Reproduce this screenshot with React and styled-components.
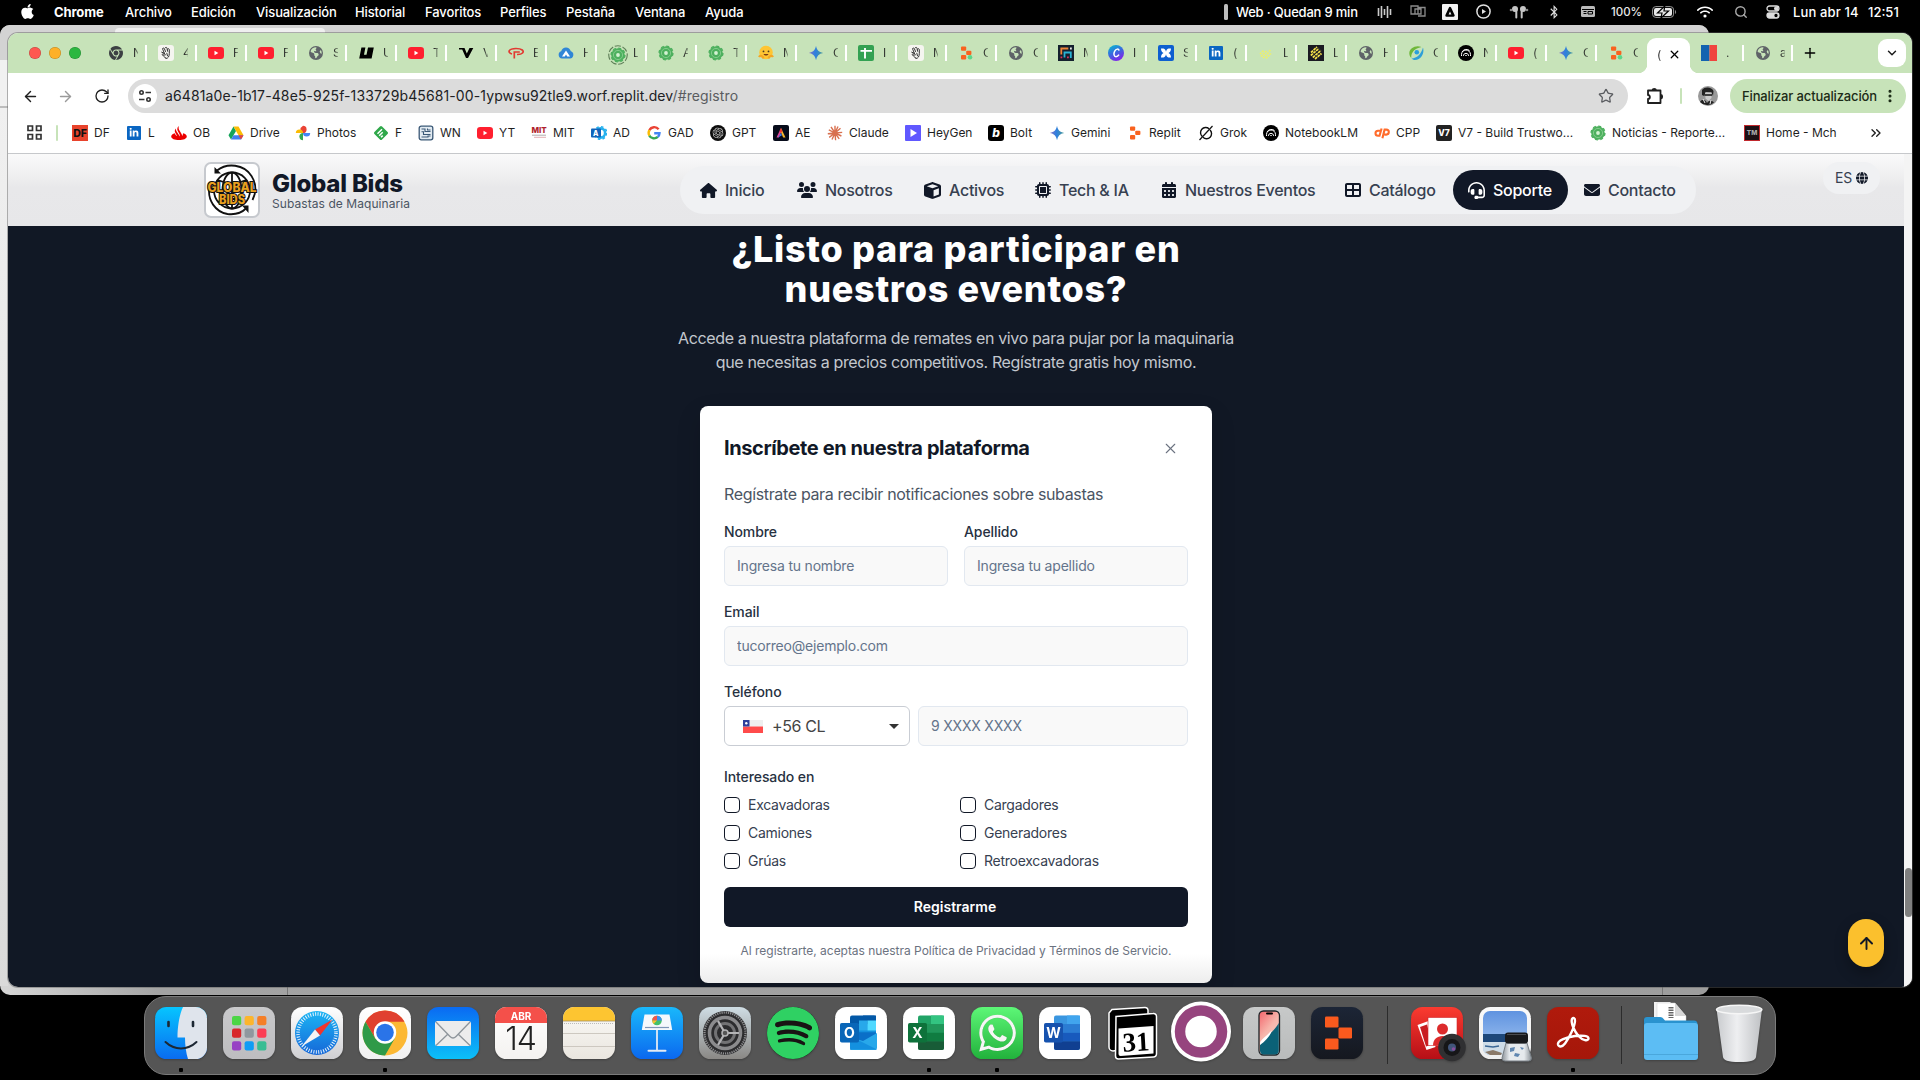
import React from "react";
import styled, { createGlobalStyle, css } from "styled-components";
import {
  FaApple, FaLinkedinIn, FaBluetoothB, FaWifi, FaGlobe, FaEarthAmericas,
  FaHouse, FaUsers, FaCube, FaMicrochip, FaCalendarDays, FaTableCellsLarge, FaHeadset,
  FaEnvelope, FaChrome, FaSpotify, FaWhatsapp,
} from "react-icons/fa6";
import { SiOpenai } from "react-icons/si";
import {
  ArrowLeft, ArrowRight, ArrowUp, RotateCw, Star, ChevronDown, X, Plus, EllipsisVertical,
  Search, ChevronsRight,
} from "lucide-react";

const sans = `Inter, "Liberation Sans", sans-serif`;

const Global = createGlobalStyle`
  *, *::before, *::after { box-sizing: border-box; }
  body { margin: 0; background: #000; font-family: ${sans}; overflow: hidden; }
  h1, h2, p { margin: 0; }
  svg { display: block; flex: none; }
  input, button { font-family: inherit; margin: 0; }
`;

/* ---------- desktop ---------- */
const Desktop = styled.div`
  position: relative; width: 1920px; height: 1080px; background: #000; overflow: hidden;
`;
const MenuBar = styled.header`
  height: 25px; display: flex; align-items: center; justify-content: space-between;
  padding: 0 19px 2px 19px; color: #fff; font-size: 13px; font-weight: 500;
`;
const MenuGroup = styled.nav`display: flex; align-items: center; height: 23px;`;
const MenuItem = styled.span`
  width: ${(p) => p.$w}px; letter-spacing: -0.12px; white-space: pre; flex: none;
  font-weight: ${(p) => (p.$bold ? 700 : 500)};
`;
const Status = styled.span`
  width: ${(p) => p.$w}px; display: flex; justify-content: ${(p) => (p.$left ? "flex-start" : "center")};
  align-items: center; flex: none; white-space: pre; color: ${(p) => p.$c || "#e8e8e8"};
  font-size: ${(p) => p.$size || 13}px; letter-spacing: ${(p) => p.$ls || 0}px;
`;
const BackWindow = styled.div`
  position: absolute; left: 0; top: 25px; width: 1709px; height: 970px; border-radius: 10px;
  background: linear-gradient(90deg, #d4d4d4 0, #d4d4d4 8px, #a3a3a3 160px, #9d9d9d 100%);
  overflow: hidden; display: flex; flex-direction: column; justify-content: space-between;
`;
const BackTop = styled.div`
  height: 35px; background: #d3d3d3; display: flex; align-items: flex-start; padding: 3px 0 0 115px;
`;
const BackTab = styled.i`width: 210px; height: 20px; border-radius: 4px; background: #efefef;`;
const BackSide = styled.div`flex: 1; width: 8px; background: linear-gradient(#f1f1f1 0 46px, #bdbdbd 46px 48px, #f0f0f0 48px, #dadada);`;
const BackFoot = styled.div`
  height: 9px; display: flex; justify-content: space-between; padding: 0 46px 0 287px;
  i { width: 1px; background: #777; }
`;

/* ---------- browser window ---------- */
const Browser = styled.main`
  position: absolute; left: 8px; top: 33px; width: 1904px; height: 954px; border-radius: 10px;
  overflow: hidden; background: #fff; display: flex; flex-direction: column;
  box-shadow: 0 0 0 1px rgba(90, 90, 90, 0.45);
`;
const TabStrip = styled.div`
  height: 40px; background: #c7e3b9; display: flex; align-items: center; padding: 0 6px 1px 21px; flex: none;
`;
const Lights = styled.div`display: flex; gap: 8px; width: 68px; flex: none;`;
const Light = styled.i`
  width: 12px; height: 12px; border-radius: 50%; background: ${(p) => p.$c};
  box-shadow: inset 0 0 0 0.5px rgba(0, 0, 0, 0.25);
`;
const Tab = styled.div`
  width: ${(p) => p.$w || 50}px; height: 16px; display: flex; align-items: center; flex: none;
  padding-left: 11px; border-right: 2px solid ${(p) => (p.$last ? "transparent" : "#fff")};
  font-size: 12px; line-height: 16px; color: #1f1f1f;
`;
const Favicon = styled.span`width: 16px; height: 16px; display: grid; place-items: center; flex: none;`;
const TabText = styled.span`
  width: 5px; overflow: hidden; margin-left: ${(p) => p.$ml ?? 9}px; white-space: nowrap; flex: none;
  mask-image: linear-gradient(90deg, #000 20%, rgba(0, 0, 0, 0.35));
`;
const ActiveTab = styled.div`
  width: 43px; height: 35px; align-self: flex-end; background: #fff; border-radius: 9px 9px 0 0;
  display: flex; align-items: center; gap: 6px; padding: 0 0 2px 10px; position: relative; font-size: 12px;
  margin: 0 0 -1px 2px; flex: none;
  &::before, &::after { content: ""; position: absolute; bottom: 0; width: 9px; height: 9px; }
  &::before { left: -9px; background: radial-gradient(circle at 0 0, transparent 9px, #fff 9.5px); }
  &::after { right: -9px; background: radial-gradient(circle at 100% 0, transparent 9px, #fff 9.5px); }
`;
const TabMenu = styled.button`
  width: 28px; height: 28px; border: 0; border-radius: 9px; background: #fff; margin-left: auto;
  display: grid; place-items: center; padding: 0; color: #1f1f1f;
`;
const NewTab = styled.span`width: 33px; display: grid; place-items: center;`;

const Toolbar = styled.div`height: 46px; display: flex; align-items: center; padding: 0 6px 0 10px; flex: none;`;
const NavIcon = styled.span`
  width: ${(p) => p.$w}px; display: grid; place-items: center; color: ${(p) => p.$c || "#1f1f1f"}; flex: none;
  padding-left: ${(p) => p.$pl || 0}px; margin-right: ${(p) => p.$mr || 0}px;
`;
const Omnibox = styled.div`
  width: 1500px; height: 34px; border-radius: 17px; background: #dcdcdc; display: flex; align-items: center;
  padding: 0 14px 0 5px; font-size: 14px; color: #202124; flex: none;
`;
const Chip = styled.span`width: 24px; height: 24px; border-radius: 50%; background: #fff; display: grid; place-items: center; margin-right: 8px;`;
const Url = styled.span`letter-spacing: 0.115px; flex: 1; padding-bottom: 1px; span { color: #5a5c60; }`;
const Divider = styled.i`width: 2px; height: 16px; border-radius: 1px; background: #c7e3b9; flex: none;`;
const Update = styled.button`
  width: 176px; height: 34px; border: 0; border-radius: 17px; background: #c7e3b9; color: #1c2b16;
  font-size: 13px; font-weight: 500; letter-spacing: -0.13px; display: flex; align-items: center;
  justify-content: space-between; padding: 0 8px 0 12px; margin-left: auto; white-space: nowrap; flex: none;
`;
const Bookmarks = styled.div`
  height: 35px; display: flex; align-items: center; flex: none; border-bottom: 1px solid #c6c8cb;
  padding: 0 0 7px 18px; font-size: 12px; color: #1f1f1f;
`;
const Bookmark = styled.span`
  width: ${(p) => p.$w}px; display: flex; align-items: center; gap: 6px; flex: none; white-space: nowrap;
`;

/* ---------- web page ---------- */
const Viewport = styled.div`flex: 1; display: flex; min-height: 0;`;
const Page = styled.div`flex: 1; background: #111825; display: flex; flex-direction: column; position: relative;`;
const Scrollbar = styled.div`
  width: 8px; background: #f4f4f4; padding-top: 714px; flex: none;
  i { display: block; width: 7px; margin-left: 1px; height: 49px; border-radius: 4px; background: #7f7f7f; }
`;
const SiteHeader = styled.header`
  height: 72px; background: linear-gradient(#fafafa 0, #f4f4f5 12px, #e8e8ea 34px, #e7e7e9);
  display: flex; align-items: flex-start; flex: none; padding: 8px 24px 0 196px;
`;
const Brand = styled.div`display: flex; gap: 12px; width: 476px; flex: none;`;
const LogoBox = styled.div`width: 56px; height: 56px; border: 2px solid #c6c9ce; border-radius: 7px; background: #fff; overflow: hidden;`;
const BrandName = styled.div`
  font-size: 24px; font-weight: 800; line-height: 27px; color: #111827; letter-spacing: -0.22px; padding-top: 8px;
`;
const BrandSub = styled.div`font-size: 12px; line-height: 14px; color: #4b5563; letter-spacing: 0.07px;`;
const Pill = styled.nav`
  width: 1016px; height: 48px; margin-top: 4px; border-radius: 24px; background: #f0f1f3; display: flex;
  align-items: center; padding-left: 4px; flex: none;
`;
const PillItem = styled.a`
  height: 40px; width: ${(p) => p.$w}px; border-radius: 20px; display: flex; align-items: center; flex: none;
  padding-left: 16px; gap: ${(p) => p.$gap ?? 8}px; font-size: 16px; font-weight: 500; white-space: nowrap;
  letter-spacing: -0.27px; color: #374151; svg { color: #111827; }
  ${(p) => p.$active && css`background: #111827; color: #fff; padding-left: 15px; svg { color: #fff; }`}
`;
const Lang = styled.div`
  margin-left: auto; width: 57px; height: 32px; border-radius: 16px; background: #f0f1f3; display: flex;
  align-items: center; justify-content: center; gap: 4px; font-size: 14px; color: #374151; padding-bottom: 1px;
  letter-spacing: -0.3px;
  svg { color: #111827; }
`;
const Hero = styled.section`display: flex; flex-direction: column; align-items: center; padding-top: 3px;`;
const Heading = styled.h1`
  color: #fff; font-size: 36px; line-height: 40px; font-weight: 800; text-align: center; letter-spacing: 0.7px;
`;
const Lead = styled.p`
  color: #c3c7ce; font-size: 16px; line-height: 24px; text-align: center; margin-top: 17px; white-space: nowrap;
  letter-spacing: -0.36px;
`;
const Card = styled.form`
  width: 512px; height: 577px; margin-top: 32px; border-radius: 8px; padding: 28px 24px 0; display: flex;
  flex-direction: column; background: linear-gradient(#fff 0, #fff 548px, #ededed 100%);
  box-shadow: 0 10px 24px rgba(0, 0, 0, 0.15);
`;
const CardHead = styled.div`display: flex; justify-content: space-between; align-items: center; height: 28px; padding-right: 9px; color: #6b7280;`;
const CardTitle = styled.h2`font-size: 20px; line-height: 28px; font-weight: 700; color: #111827; letter-spacing: -0.4px;`;
const CardText = styled.p`font-size: 16px; line-height: 24px; color: #4b5563; margin-top: 20px; height: 40px; letter-spacing: -0.345px;`;
const Row = styled.div`display: flex; gap: ${(p) => p.$gap}px;`;
const Field = styled.label`
  display: flex; flex-direction: column; flex: 1; font-size: 14px; line-height: 20px; font-weight: 500;
  color: #273141; height: 80px; gap: 4px; min-width: 0; letter-spacing: -0.09px;
`;
const Input = styled.input`
  height: 40px; border: 1px solid #e2e8f0; border-radius: 6px; background: #f9f9f9; padding: 0 12px 2px;
  font-size: 14px; width: 100%; outline: 0; letter-spacing: -0.2px;
  &::placeholder { color: #64748b; opacity: 1; }
`;
const Select = styled.div`
  width: 186px; height: 40px; border: 1px solid #c9cdd4; border-radius: 6px; display: flex; align-items: center;
  padding: 0 10px 0 18px; color: #444; font-size: 16px; flex: none; font-weight: 400; gap: 9px; letter-spacing: -0.4px;
  span { flex: 1; }
`;
const Caret = styled.i`border: 5px solid transparent; border-top-color: #333; border-bottom: 0;`;
const GroupLabel = styled.div`font-size: 14px; line-height: 20px; font-weight: 500; color: #273141; margin-top: 5px; letter-spacing: -0.09px;`;
const Checks = styled.div`display: grid; grid-template-columns: 236px 1fr; row-gap: 8px; margin-top: 8px;`;
const Check = styled.label`
  display: flex; align-items: center; gap: 8px; height: 20px; font-size: 14px; color: #374151; letter-spacing: -0.27px;
  i { width: 16px; height: 16px; border: 1px solid #111827; border-radius: 4px; }
  span { padding-bottom: 1px; }
`;
const Submit = styled.button`
  height: 40px; border: 0; border-radius: 6px; background: #111827; color: #fff; font-size: 14px; font-weight: 600;
  margin-top: 16px; flex: none; padding: 0 2px 2px 0;
`;
const Legal = styled.p`
  font-size: 12px; line-height: 16px; color: #6b7280; text-align: center; margin-top: 16px; white-space: nowrap;
  letter-spacing: -0.03px;
`;
const ToTop = styled.button`
  position: absolute; right: 20px; bottom: 20px; width: 36px; height: 48px; border: 0; border-radius: 18px;
  background: #fbc02d; display: grid; place-items: center; padding: 0; color: #111827;
  box-shadow: 0 6px 14px rgba(0, 0, 0, 0.3);
`;

/* ---------- dock ---------- */
const Dock = styled.footer`
  position: absolute; left: 144px; top: 996px; width: 1632px; height: 79px; border-radius: 22px;
  background: #555; border: 1px solid #7b7b7b; display: flex; padding: 10px 0 0 2px;
`;
const DockItem = styled.div`
  width: 68px; height: 68px; display: flex; flex-direction: column; align-items: center; gap: 9px; flex: none;
  svg { overflow: visible; filter: drop-shadow(0 1px 1px rgba(0, 0, 0, 0.25)); }
`;
const Running = styled.i`width: 4px; height: 4px; border-radius: 1px; background: #000;`;
const DockRule = styled.i`width: 1px; height: 58px; background: #2c2c2c; margin: -1px ${(p) => p.$r}px 0 ${(p) => p.$l}px; flex: none;`;

/* ---------- small icons (16px grid) ---------- */
const S = ({ s = 16, vb = "0 0 16 16", children }) => (
  <svg width={s} height={s} viewBox={vb} fill="none">{children}</svg>
);
const Youtube = () => (
  <S><rect y="2" width="16" height="12" rx="3.2" fill="#ff1f2f" /><path d="M6.500 5.800v4.400L10.300 8z" fill="#fff" /></S>
);
const GlobeFav = () => <FaEarthAmericas size={14} color="#5f6368" />;
const Gemini = () => (
  <S>
    <defs><linearGradient id="gm" x2="1"><stop stopColor="#8a6fc0" /><stop offset=".45" stopColor="#2f7fe0" /><stop offset="1" stopColor="#4a9a94" /></linearGradient></defs>
    <path d="M8 .8C8.700 5 11 7.300 15.200 8 11 8.700 8.700 11 8 15.200 7.300 11 5 8.700.8 8 5 7.300 7.300 5 8 .8z" fill="url(#gm)" />
  </S>
);
const Replit = ({ g }) => (
  <S>
    <rect x="3" y="1.500" width="5.200" height="4.300" rx="1" fill="#f9621f" />
    <rect x="8.200" y="5.800" width="5.200" height="4.300" rx="1" fill="#f9621f" />
    <rect x="3" y="10.100" width="5.200" height="4.300" rx="1" fill="#f9621f" />
    {g && <circle cx="12" cy="12.300" r="2.300" fill="#5cd68a" />}
  </S>
);
const GreenSeal = ({ ring }) => (
  <S s={ring ? 20 : 16}>
    {ring && <circle cx="8" cy="8" r="7.400" stroke="#5f7f58" strokeDasharray="5 1.400" strokeWidth=".9" />}
    <g transform={ring ? "translate(1.600 1.600) scale(.8)" : undefined}>
      <circle cx="8" cy="8" r="6.800" fill="#4db05e" />
      <circle cx="8" cy="8" r="6.900" stroke="#4db05e" strokeWidth="1.400" strokeDasharray="3 2.420" />
      <circle cx="8" cy="8" r="4.600" stroke="#8fd096" strokeWidth=".8" />
      <circle cx="8" cy="8" r="1.900" fill="#d3f2d2" />
    </g>
  </S>
);
const LinkedIn = () => (
  <S><rect x="1" y="1" width="14" height="14" rx="1" fill="#0a66c2" /><g transform="translate(3 2.700)"><FaLinkedinIn size={10} color="#fff" /></g></S>
);
const ChromeFav = () => <FaChrome size={14} color="#3c4043" />;
const Hand = () => (
  <S>
    <rect width="16" height="16" rx="3" fill="#f5f5f0" />
    <path d="M4.500 3.500c.8-1 1.700-.3 2 .5l1 2.500M7 3c.6-1.200 1.800-.8 2 .3l.6 3M9.600 4c.7-.9 1.700-.3 1.700.8v3.500c0 3-1 5.200-3.300 5.200M4.800 4.500l1.400 3.300M3.700 7.200l3.300 1.300-2.400.6c-1 .4-.4 1.400.4 1.200l2.500-.5M5.800 11.500l2 1.500M8.800 8.200l.7 2.600" stroke="#333" strokeWidth="1" strokeLinecap="round" />
  </S>
);
const BoldU = () => <S><path d="M3.400 2.500h4L6 9.800h2.500L10 2.500h5.800l-2.200 11H1.200z" fill="#000" /></S>;
const VMark = () => <S><path d="M1 3h5.500l2.300 5.500L11.500 3h3.800L10 13H8L4.200 4.600H1z" fill="#000" /></S>;
const RedF = () => (
  <S><path d="M4 9C-1 7.500.5 3.500 8 3.500c6 0 8.500 2.500 6.500 4.500-1 1.100-3 1.600-5.500 1.500" stroke="#e23a32" strokeWidth="1.700" /><path d="M6.300 13.500V7h5.500" stroke="#e23a32" strokeWidth="1.700" /></S>
);
const Cloud = () => (
  <S><path d="M4 13.500a3.700 3.700 0 01-.8-7.200C3.800 3.800 5.700 2.500 8 2.500s4.200 1.300 4.800 3.800A3.700 3.700 0 0112 13.500z" fill="#2f86d6" /><path d="M8 5.500l-4 6h2.800L8 9.500l1.200 2H12z" fill="#fff" /></S>
);
const Hug = () => (
  <S><circle cx="8" cy="7.500" r="6.800" fill="#ffc533" /><path d="M5.500 9c1 2 4 2 5 0z" fill="#7a3b14" /><circle cx="5.500" cy="6.400" r=".9" fill="#4a3b24" /><circle cx="10.500" cy="6.400" r=".9" fill="#4a3b24" /><path d="M1 12c1-2 4-1 4.500 1.500M15 12c-1-2-4-1-4.500 1.500" stroke="#f5a623" strokeWidth="2.200" /></S>
);
const Sheets = () => (
  <S><rect width="16" height="16" rx="2" fill="#33a152" /><path d="M7 3v10.500M2.500 5.900h11.500" stroke="#fff" strokeWidth="1.900" /></S>
);
const NavyF = () => (
  <S><rect width="16" height="16" fill="#14202e" /><path d="M3.300 9.500V3.500h7" stroke="#f0853a" strokeWidth="1.800" /><path d="M6.500 12.500V7.500h6.300V13" stroke="#29b4d4" strokeWidth="1.800" /><path d="M12 2.600h1.800v1.800H12z" fill="#e8e8e8" /><path d="M2.500 11.500h1.800v1.800H2.500zM9 11.500h1.800v1.800H9z" fill="#e0305c" /></S>
);
const Canva = () => (
  <S>
    <defs><linearGradient id="cv" x2=".5" y2="1"><stop stopColor="#00c4cc" /><stop offset=".55" stopColor="#3a68e0" /><stop offset="1" stopColor="#7d2ae8" /></linearGradient></defs>
    <circle cx="8" cy="8" r="8" fill="url(#cv)" /><path d="M11 5.600c-.2-2.300-3-1.800-4.300.5-1.400 2.500-.8 5.600 1.300 5.600 1.300 0 2.300-.9 3-2" stroke="#fff" strokeWidth="1.500" />
  </S>
);
const Butterfly = () => (
  <S><rect width="16" height="16" rx="2" fill="#0d5fd0" /><path d="M3 3.500h2.500C7 4.200 7.800 5.300 8 6.800 8.200 5.300 9 4.200 10.500 3.500H13c0 2-.8 3.800-2.500 4.500 1.700.7 2.500 2.500 2.500 4.500h-2.500C9 11.800 8.200 10.700 8 9.200 7.800 10.700 7 11.800 5.500 12.500H3c0-2 .8-3.800 2.500-4.500C3.800 7.300 3 5.500 3 3.500z" fill="#fff" /></S>
);
const Grains = ({ dark }) => (
  <S>
    {dark && <rect width="16" height="16" fill="#1a1a22" />}
    <path
      d={dark ? "M3 7.500L9 2M2.800 10.500L11 3.500M4.800 12.500L13 5.500M7 14l6.500-5.500" : "M2 9l4-4M3 11.500L8.500 6M5 13l6-6M8 13.500l5-5M11 6.500l2-2"}
      stroke={dark ? "#f4e04a" : "#eef06a"} strokeWidth="1.700" strokeDasharray={dark ? "2.800 .7" : "2 .9"}
    />
  </S>
);
const Swirl = () => (
  <S>
    <path d="M13.500 2C8-.5 1 3 1.300 8.500c.1 1.800.8 3.300 2 4.500C2.800 8 6 3.500 13.500 2z" fill="#6fb83a" />
    <path d="M15 2.500c1.500 5-1 12-8 12.500-1.500 0-2.600-.6-3.500-1.500 5.500-.5 9.500-4 11.500-11z" fill="#2f9fd8" />
    <circle cx="8.800" cy="7.200" r="2.300" fill="#2aa0dc" />
  </S>
);
const Notebook = () => (
  <S><circle cx="8" cy="8" r="8" fill="#000" /><path d="M3.500 11V9.500a4.500 4.500 0 019 0V11M5.500 11v-.8a2.600 2.600 0 015 0v.8M7.500 11c0-1 1-1 1 0M4 7a5 5 0 017.500-1.500" stroke="#fff" strokeWidth="1" /></S>
);
const Flagish = () => <S><rect width="8.500" height="16" fill="#1363b0" /><rect x="8.500" width="7.500" height="16" fill="#f0443e" /></S>;
const Square = ({ bg, children, r = 2 }) => <S><rect width="16" height="16" rx={r} fill={bg} />{children}</S>;
const Glyph = ({ children, fill, size, x = 8, y = 12, italic }) => (
  <text x={x} y={y} fontSize={size} fontWeight="800" fontStyle={italic ? "italic" : "normal"} textAnchor="middle" fill={fill} fontFamily="Inter, sans-serif">{children}</text>
);

const GreenRing = () => <GreenSeal ring />;
const ReplitApp = () => <Replit g />;
const DarkGrains = () => <Grains dark />;

const tabs = [
  [ChromeFav, "N"], [Hand, "4"], [Youtube, "F"], [Youtube, "F"], [GlobeFav, "S"], [BoldU, "U"], [Youtube, "T"],
  [VMark, "V"], [RedF, "E"], [Cloud, "H"], [GreenRing, "L"], [GreenSeal, "A"], [GreenSeal, "T"],
  [Hug, "M"], [Gemini, "C"], [Sheets, "I"], [Hand, "M"], [ReplitApp, "C"], [GlobeFav, "C"], [NavyF, "M"],
  [Canva, "I"], [Butterfly, "S"], [LinkedIn, "("], [Grains, "L"], [DarkGrains, "L"], [GlobeFav, "H"],
  [Swirl, "C"], [Notebook, "N"], [Youtube, "("], [Gemini, "C"], [ReplitApp, "C"],
];

const Santander = () => (
  <S>
    <path d="M4 8.200C1.600 8.900.2 10 .2 11.400.2 13.600 3.700 15 8 15s7.800-1.400 7.800-3.600c0-1.400-1.400-2.500-3.800-3.200 0 1-.3 1.900-.8 2.700-.1-1-.5-2-1.200-3L8.200 5C7.700 4.100 7.500 3 7.700 1 6 2.700 5.900 4.700 6.900 6.300l1.500 2.600c.4.800.6 1.600.5 2.500L5.500 6.300C5 5.500 4.800 4.700 5 3.600 3.700 4.800 3.500 6.300 4.200 7.600l2 3.600C4.700 10.400 4 9.300 4 8.200z" fill="#ec0000" />
  </S>
);
const Drive = () => <S><path d="M5.500 1.500L8 5.900 3 14.500.5 10.200z" fill="#14a45a" /><path d="M5.500 1.500h5l5 8.700h-5z" fill="#fbbc04" /><path d="M5.500 10.200h10L13 14.500H3z" fill="#3f7ff0" /><path d="M13 14.500l2.500-4.300h-5z" fill="#ea4335" /></S>;
const Photos = () => (
  <S>
    <path d="M8 .8a3.600 3.600 0 010 7.200z" fill="#ea4335" /><path d="M8 .8V8H5.500V3z" fill="#ea4335" />
    <path d="M15.200 8a3.600 3.600 0 01-7.200 0z" fill="#4285f4" /><path d="M8 15.200A3.600 3.600 0 018 8z" fill="#34a853" />
    <path d="M.8 8A3.600 3.600 0 018 8z" fill="#fbbc04" />
  </S>
);
const Feedly = () => <S><rect x="2.600" y="2.600" width="10.800" height="10.800" rx="1.500" transform="rotate(45 8 8)" fill="#2fa84a" /><path d="M4.500 8.800L9 4.300M6.200 10.700l3.500-3.500M8 12.300l1.700-1.700" stroke="#fff" strokeWidth="1.500" /></S>;
const Wn = () => <S><rect x="1.200" y="1.200" width="13.600" height="13.600" rx="2" stroke="#3a5876" strokeWidth="1.300" fill="#e2ebf2" /><path d="M3.500 4h3.500v2.500h5.500M3.500 6.800h2v2.700h7M3.500 12h6M9.500 3.500v1.500h3M10 12.500v-1.500h2.500" stroke="#3a5876" strokeWidth="1.100" /></S>;
const Mit = () => <S><Glyph fill="#b01f2e" size={8} y={8}>MIT</Glyph><path d="M1 10.200h14" stroke="#999" strokeWidth=".8" /><path d="M3 12.300h12" stroke="#e0a8ae" strokeWidth=".9" /></S>;
const Ad = () => <S><circle cx="9.500" cy="8" r="4.600" stroke="#27b1ee" strokeWidth="2.600" /><circle cx="9.500" cy="8" r="6.300" stroke="#27b1ee" strokeWidth="1.500" strokeDasharray="2.600 2.300" /><rect y="3.500" width="10" height="9" rx="1" fill="#0f63ba" /><Glyph fill="#fff" size={7} x={4.800} y={10.600}>A</Glyph></S>;
const GoogleG = () => <S><path d="M12.600 4.200A5.500 5.500 0 003.400 5.200" stroke="#ea4335" strokeWidth="2.400" /><path d="M3.400 5.200a5.500 5.500 0 000 5.500" stroke="#fbbc04" strokeWidth="2.400" /><path d="M3.300 10.600a5.500 5.500 0 008.500 1.300" stroke="#34a853" strokeWidth="2.400" /><path d="M11.800 12a5.500 5.500 0 001.700-3.700H8.200" stroke="#4285f4" strokeWidth="2.400" /></S>;
const Gpt = () => <S><circle cx="8" cy="8" r="8" fill="#0d0d0d" /><g transform="translate(2.500 2.500)"><SiOpenai size={11} color="#ccc" /></g></S>;
const Ae = () => <Square bg="#070b1a"><path d="M8 3L3.500 12.500h2.300L8 7.500z" fill="#e0489a" /><path d="M8 3l4.500 9.500h-2.300L8 7.500z" fill="#f5b52e" /><path d="M8 3l1.500 3.200L8 8 6.500 6.200z" fill="#f0402e" /><path d="M5 12.500L8 8l1 2.300z" fill="#3f7cf0" /></Square>;
const Claude = () => <S><path d="M8 8L8 .8M8 8l3-6.500M8 8l5.500-4.700M8 8l7.200-.6M8 8l6.400 3M8 8l4.200 5.800M8 8l.6 7.200M8 8l-3 6.500M8 8l-5.800 4.400M8 8l-7.200.8M8 8L1.800 4.800M8 8L4 1.800" stroke="#d8704f" strokeWidth="1.400" /></S>;
const HeyGen = () => <Square bg="#6058ff" r={1}><path d="M5.500 4v8l6.500-4z" fill="#fff" /></Square>;
const Bolt = () => <Square bg="#000" r={3}><Glyph fill="#fff" size={12} y={12.300} italic>b</Glyph></Square>;
const Grok = () => <S><path d="M11 3.800A5 5 0 004.300 11.500M5 12.300A5 5 0 0012 5" stroke="#111" strokeWidth="1.400" /><path d="M1.500 15L14.500 1" stroke="#111" strokeWidth="1.200" /></S>;
const Cpp = () => <S><path d="M6.500 5.800H4a2.500 2.500 0 000 5h1.500L7.600 3.500" stroke="#ff6c2c" strokeWidth="2.100" /><path d="M8.400 13.300L10.600 4.600h1.700a2.500 2.500 0 010 5h-1.900" stroke="#ff6c2c" strokeWidth="2.100" /></S>;
const DiarioF = () => <Square bg="#e8432c" r={0}><Glyph fill="#111" size={10.500}>DF</Glyph></Square>;
const V7 = () => <Square bg="#222"><Glyph fill="#fff" size={8.500} y={11}>V7</Glyph></Square>;
const Mch = () => <Square bg="#1c1014" r={0}><rect x=".5" y=".5" width="15" height="15" stroke="#c0282d" /><Glyph fill="#aaa" size={6.500} y={10.300}>TM</Glyph></Square>;

const bookmarks = [
  [DiarioF, "DF", 54], [LinkedIn, "L", 45], [Santander, "OB", 57], [Drive, "Drive", 67], [Photos, "Photos", 78],
  [Feedly, "F", 45], [Wn, "WN", 59], [Youtube, "YT", 54], [Mit, "MIT", 60], [Ad, "AD", 55], [GoogleG, "GAD", 64],
  [Gpt, "GPT", 63], [Ae, "AE", 54], [Claude, "Claude", 78], [HeyGen, "HeyGen", 83], [Bolt, "Bolt", 61],
  [Gemini, "Gemini", 78], [Replit, "Replit", 71], [Grok, "Grok", 65], [Notebook, "NotebookLM", 111], [Cpp, "CPP", 62],
  [V7, "V7 - Build Trustwo...", 154], [GreenSeal, "Noticias - Reporte...", 154], [Mch, "Home - Mch", 124],
];

const LogoMark = () => (
  <svg width="52" height="52" viewBox="0 0 52 52" fill="none">
    <g stroke="#111" strokeWidth="1.800">
      <circle cx="26" cy="26.500" r="18" /><ellipse cx="26" cy="26.500" rx="9.500" ry="18" /><path d="M26 8.500v36M11.500 16c9 4 20 4 29 0M11.500 38c9-4 20-4 29 0" />
    </g>
    <path d="M11 6.500C21-1.500 38 0 45.500 12c5 8 4.500 17 1 24" stroke="#111" strokeWidth="1.800" />
    <path d="M3.500 23c-2.500 13 6 25 18 27 8 1 14-1 19-6" stroke="#111" strokeWidth="1.800" />
    <path d="M8.500 3v6.500h6.500zM42.500 49v-7.500H36z" fill="#111" />
    <g fontFamily="Inter, sans-serif" fontWeight="800" fill="#e9a01f" stroke="#111" strokeWidth="2" paintOrder="stroke" textAnchor="middle">
      <text x="26" y="27.500" fontSize="12.500" textLength="49" lengthAdjust="spacingAndGlyphs">GLOBAL</text>
      <text x="26" y="39.500" fontSize="12.500" textLength="26" lengthAdjust="spacingAndGlyphs">BIDS</text>
    </g>
  </svg>
);

/* ---------- dock icons (52px grid) ---------- */
const D = ({ id, from, to, children, plain }) => (
  <svg width="52" height="52" viewBox="0 0 52 52" fill="none">
    {!plain && (
      <>
        <defs><linearGradient id={id} x2="0" y2="1"><stop stopColor={from} /><stop offset="1" stopColor={to} /></linearGradient></defs>
        <rect width="52" height="52" rx="11.500" fill={`url(#${id})`} />
      </>
    )}
    {children}
  </svg>
);
const Finder = () => (
  <D id="fi" from="#06c5ff" to="#0a6cf0">
    <path d="M28 0H40.500A11.500 11.500 0 0152 11.500V40.500A11.500 11.500 0 0140.500 52H33C31 46 30 38 30 30.500h-7.500C22.500 18 25 6 28 0z" fill="#dfe4ec" />
    <path d="M13.500 15v4M38 15v4" stroke="#1c2733" strokeWidth="2.600" strokeLinecap="round" />
    <path d="M10.500 35c9 8.500 22 8.500 31 0" stroke="#1c2733" strokeWidth="2" strokeLinecap="round" />
  </D>
);
const pad = ["#4cd545", "#fcb52c", "#f57f28", "#d8262b", "#8f979e", "#fc3d54", "#9742c4", "#0f9cf5", "#38bd93"];
const Launchpad = () => (
  <D id="lp" from="#c9c9cb" to="#bdbdc0">
    {pad.map((c, i) => <rect key={c} x={9 + (i % 3) * 12.600} y={9 + Math.floor(i / 3) * 12.600} width="9.200" height="9.200" rx="2" fill={c} />)}
  </D>
);
const Safari = () => (
  <D id="sf" from="#ffffff" to="#cfcfd2">
    <defs><linearGradient id="sfb" x2="0" y2="1"><stop stopColor="#1bb5f4" /><stop offset="1" stopColor="#1667d8" /></linearGradient></defs>
    <circle cx="26" cy="26" r="22" fill="url(#sfb)" />
    <circle cx="26" cy="26" r="19" stroke="#e4f2fc" strokeWidth="3.600" strokeDasharray="1 1.487" />
    <path d="M41.500 12.500L24 22.500l5 6z" fill="#f0352d" /><path d="M10.500 39.500L24 22.500l5 6z" fill="#f4f4f4" />
  </D>
);
const ChromeDock = () => (
  <D id="ch" from="#ffffff" to="#f1f1f1">
    <circle cx="26" cy="26" r="22.500" fill="#fcb833" />
    <path d="M6.500 14.800A22.500 22.500 0 0145.500 14.800H26L16.300 31.600z" fill="#e0402f" />
    <path d="M6.500 14.800A22.500 22.500 0 0026 48.500L35.700 31.600 16.300 31.600z" fill="#2f9a48" />
    <circle cx="26" cy="25.500" r="11.200" fill="#fff" /><circle cx="26" cy="25.500" r="8.800" fill="#2a74e8" />
  </D>
);
const Mail = () => (
  <D id="ml" from="#0a6af2" to="#0cc0f8">
    <rect x="8" y="14" width="36" height="25" rx="2.500" fill="#ececec" />
    <path d="M9 15l14 14.500c2 2 4 2 6 0L43 15M9 38.500L21 27M43 38.500L31 27" stroke="#8e959b" strokeWidth="1.300" />
  </D>
);
const CalendarDock = () => (
  <D id="cl" from="#ffffff" to="#f4f2f0">
    <path d="M0 16V11.500A11.500 11.500 0 0111.500 0h29A11.500 11.500 0 0152 11.500V16z" fill="#f4504a" />
    <text x="26" y="12.600" fontSize="10" fontWeight="700" textAnchor="middle" fill="#fff" fontFamily="Inter, sans-serif">ABR</text>
    <text x="25.500" y="43" fontSize="32" fontWeight="300" textAnchor="middle" fill="#222" fontFamily="Inter, sans-serif" letterSpacing="-1">14</text>
  </D>
);
const Notes = () => (
  <D id="nt" from="#fbfaf8" to="#eae6df">
    <path d="M0 14V11.500A11.500 11.500 0 0111.500 0h29A11.500 11.500 0 0152 11.500V14z" fill="#fdc531" />
    <path d="M0 14h52" stroke="#a58f5c" strokeWidth=".8" /><path d="M1 16.500h50" stroke="#bbb" strokeWidth="1.200" strokeDasharray="1 1" />
    <path d="M0 26.500h52M0 39.500h52" stroke="#cdc8c0" />
  </D>
);
const Keynote = () => (
  <D id="kn" from="#19b8fb" to="#0b68ef">
    <path d="M26 23v21" stroke="#e3eaf4" strokeWidth="1.800" /><path d="M17.500 43.800h17" stroke="#e3eaf4" strokeWidth="2" strokeLinecap="round" />
    <path d="M13.500 7.500h25l2.700 15.500H10.800z" fill="#f5f8fc" /><path d="M14 20.500h24" stroke="#7f96b8" strokeWidth="1.200" />
    <circle cx="26" cy="13.500" r="4.800" fill="#42c16b" /><path d="M26 13.500V8.700a4.800 4.800 0 014.800 4.800z" fill="#3c8ef0" /><path d="M26 13.500h-4.800A4.800 4.800 0 0126 8.700z" fill="#f2554c" /><path d="M26 13.500l-3.400 3.400a4.800 4.800 0 01-1.400-3.400z" fill="#fbbf2d" />
  </D>
);
const Settings = () => (
  <D id="st" from="#cfdde4" to="#8a8885">
    <circle cx="26" cy="26" r="22" fill="#2c2c2e" /><circle cx="26" cy="26" r="20.500" stroke="#8f8f91" strokeWidth="2.200" strokeDasharray="1.200 1" />
    <circle cx="26" cy="26" r="15.500" stroke="#8b8b8d" strokeWidth="3.500" /><circle cx="26" cy="26" r="9.500" stroke="#727274" strokeWidth="3" />
    <path d="M26 26h14M26 26L19 14M26 26L19 38" stroke="#b4b4b6" strokeWidth="2.200" /><circle cx="26" cy="26" r="3" fill="#555" stroke="#b4b4b6" strokeWidth="1.500" />
  </D>
);
const SpotifyDock = () => (
  <D plain>
    <circle cx="26" cy="26" r="26" fill="#191414" /><g transform="translate(-.8 -.8)"><FaSpotify size={53.600} color="#2fd163" /></g>
  </D>
);
const Office = ({ id, letter, c1, c2, c3, c4, c5, outlook }) => (
  <D id={id} from="#ffffff" to="#ffffff">
    <rect x="15" y="8.500" width="26" height="34.500" rx="2" fill={c1} />
    <rect x="28" y="8.500" width="13" height="8.600" fill={c2} /><rect x="15" y="17.100" width="26" height="8.600" fill={c3} />
    <rect x="15" y="25.700" width="26" height="8.600" fill={c4} /><path d="M15 34.300h26V41a2 2 0 01-2 2H17a2 2 0 01-2-2z" fill={c5} />
    {outlook && (
      <>
        <rect x="24" y="13.500" width="8.500" height="10" fill="#28a8ea" /><rect x="32.500" y="13.500" width="8.500" height="10" fill="#50d9ff" />
        <path d="M15 30l13 4 14-8v15a2 2 0 01-2 2H17a2 2 0 01-2-2z" fill="#28a8ea" /><path d="M15 29l27 13.500H17a2 2 0 01-2-2z" fill="#1490df" />
      </>
    )}
    <rect x="5" y="16" width="19" height="19.500" rx="1.800" fill={c4} /><rect x="5" y="16" width="19" height="19.500" rx="1.800" fill="rgba(0,0,0,.08)" />
    <text x="14.500" y="31" fontSize="14" fontWeight="700" textAnchor="middle" fill="#fff" fontFamily="Inter, sans-serif">{letter}</text>
  </D>
);
const WhatsappDock = () => (
  <D id="wa" from="#5df777" to="#22b23c"><g transform="translate(5.500 5)"><FaWhatsapp size={42} color="#f6f6f6" /></g></D>
);
const NotionCal = () => (
  <D plain>
    <path d="M5 2.500L38 .5a3 3 0 013 2.500v36L6 44a4 4 0 01-4-4V6z" fill="#000" stroke="#fff" strokeWidth="1.500" />
    <path d="M9 9.500L46 6.500a3 3 0 013.500 3V47a3 3 0 01-3 3l-35 2a3 3 0 01-3-3z" fill="#000" stroke="#fff" strokeWidth="1.500" />
    <path d="M11.500 21.500L46.500 19v27.500l-33 2.500a2 2 0 01-2-2z" fill="#fff" />
    <text x="29" y="44" fontSize="27" fontWeight="700" textAnchor="middle" fill="#000" fontFamily="Liberation Serif, serif" transform="rotate(-3 29 35)">31</text>
  </D>
);
const Ring = () => (
  <D plain><circle cx="26" cy="24.500" r="30" fill="#fff" /><circle cx="26" cy="24.500" r="21" stroke="#96447e" strokeWidth="10.500" /></D>
);
const PhoneMirror = () => (
  <D id="pm" from="#c7c9c9" to="#b9bbbb">
    <defs><linearGradient id="pms" x2=".6" y2="1"><stop stopColor="#f3636a" /><stop offset=".5" stopColor="#f7b5ab" /><stop offset="1" stopColor="#f4d0c8" /></linearGradient></defs>
    <rect x="16" y="4" width="20.500" height="44" rx="4.500" fill="url(#pms)" stroke="#1d2427" strokeWidth="1.300" />
    <path d="M17 38c3-8 11-9 18.800-22v27.500a4 4 0 01-4 4H21a4 4 0 01-4-4z" fill="#0b6177" /><path d="M17 38c4-3 10-8 12-15-5 6-11 9-12 13z" fill="#fff" />
    <rect x="23" y="5.500" width="7" height="2" rx="1" fill="#000" />
  </D>
);
const ReplitDock = () => (
  <D id="rp" from="#1c2536" to="#15181f">
    <rect x="14" y="9.500" width="13.500" height="11" rx="1.300" fill="#fa5a1e" /><rect x="27.500" y="20.500" width="13.500" height="11" rx="1.300" fill="#fa5a1e" /><rect x="14" y="31.500" width="13.500" height="11" rx="1.300" fill="#fa5a1e" />
  </D>
);
const PhotoBooth = () => (
  <D id="pb" from="#fb3b30" to="#b60f16">
    <path d="M6.500 18l11-4 7 26-9 3z" fill="#fff" /><path d="M9 20l7-2.500 5 20-6 2z" fill="#c91d22" />
    <rect x="17" y="10.500" width="29" height="28" fill="#fff" stroke="#d3252a" strokeWidth=".6" />
    <circle cx="31.500" cy="22" r="5.500" fill="#dc2b2c" /><path d="M22 38.500c0-6 4-9.500 9.500-9.500S41 32.500 41 38.500z" fill="#dc2b2c" />
    <circle cx="41" cy="40.500" r="13.800" fill="#303032" /><circle cx="41" cy="40.500" r="8.500" fill="#161618" /><circle cx="41" cy="40.500" r="4" fill="#41557a" /><circle cx="42.500" cy="42" r="1.800" fill="#8a4f9e" />
  </D>
);
const Preview = () => (
  <D id="pv" from="#fafafa" to="#eeeeee">
    <defs>
      <linearGradient id="pvs" x2="0" y2="1"><stop stopColor="#5f93e0" /><stop offset="1" stopColor="#a9c9f2" /></linearGradient>
      <linearGradient id="pvj"><stop stopColor="#8b9298" /><stop offset=".25" stopColor="#e6eaed" /><stop offset=".75" stopColor="#e6eaed" /><stop offset="1" stopColor="#8b9298" /></linearGradient>
    </defs>
    <rect x="4" y="4" width="44" height="44" rx="7" fill="url(#pvs)" /><path d="M4 27h44v8H4z" fill="#1d4779" /><path d="M4 35h44v6a7 7 0 01-7 7H11a7 7 0 01-7-7z" fill="#cfdde8" />
    <path d="M6 39l8 1 6-1" stroke="#3a6796" strokeWidth="1.600" /><path d="M6 45l8-2 9 3-1 2H11z" fill="#8a7968" />
    <path d="M27 36h21l4.500 15a3 3 0 01-3 3H26a3 3 0 01-3-3z" fill="url(#pvj)" stroke="#787f85" />
    <path d="M31 41l5-1-1 4-4 1zM36 46l5 1-2 3-4-1zM41 40l4 1-2 2z" fill="#5f86b0" />
    <rect x="26" y="25.500" width="23" height="11" rx="3" fill="#18191b" /><path d="M28 27.500h19" stroke="#4a4c50" />
  </D>
);
const Acrobat = () => (
  <D id="ac" from="#b01a0c" to="#a5170a">
    <path d="M11 37.500c-1-4 9-7.500 17-8.500 8-1 13.500 0 13.500 2.500 0 3-6 2-10-2.500-4-4.500-8-13-6.500-17 .8-2 3.200-1.200 3 2C27.700 20 22 31 18 36.500c-3 4-6.300 3.500-7 1z" stroke="#fff" strokeWidth="2.400" strokeLinejoin="round" />
  </D>
);
const Folder = () => (
  <D plain>
    <path d="M9-5h16l14 13v14H9z" fill="#f2f2f2" /><path d="M12-4h18l11 13v7H12z" fill="#fff" stroke="#ccc" strokeWidth=".5" /><path d="M30-4v13h11z" fill="#d6d6d6" /><path d="M26 0v11" stroke="#666" strokeWidth="5" strokeDasharray="1.500 1" />
    <path d="M-1 13a3 3 0 013-3h13c2 0 3 1 5 3.500h29a3.500 3.500 0 013.500 3.500v5H-1z" fill="#2a93cf" />
    <rect x="-1" y="16" width="54" height="37" rx="3" fill="#5cbdf4" /><path d="M-1 47.500h54" stroke="#4aa7dc" />
  </D>
);
const Trash = () => (
  <D plain>
    <defs><linearGradient id="tr" x2="1" y2="0"><stop stopColor="#c9cbce" /><stop offset=".45" stopColor="#eeeff1" /><stop offset="1" stopColor="#bfc1c4" /></linearGradient></defs>
    <path d="M3.500 2h45.500L43 50c-.3 3-5 5-16.500 5S10.300 53 10 50z" fill="url(#tr)" /><ellipse cx="26.200" cy="2.500" rx="22.700" ry="4.300" fill="#d8dadc" stroke="#f6f6f6" strokeWidth="1.500" />
  </D>
);

const Battery = () => (
  <svg width="25" height="12" viewBox="0 0 25 12"><rect x=".6" y=".6" width="21" height="10.800" rx="3.200" fill="none" stroke="#999" /><rect x="2" y="2" width="18" height="8" rx="2" fill="#e8e8e8" /><path d="M23.200 4v4c1.200-.4 1.200-3.600 0-4z" fill="#aaa" /><path d="M12.800 0L5.500 7h4.500L9 12 16.500 5H12z" fill="#e8e8e8" stroke="#000" strokeWidth="1.200" /></svg>
);

export default function App() {
  return (
    <Desktop>
      <Global />
      <MenuBar>
        <MenuGroup>
          <MenuItem $w={35}><FaApple size={17} /></MenuItem>
          <MenuItem $w={71} $bold>Chrome</MenuItem>
          <MenuItem $w={66}>Archivo</MenuItem>
          <MenuItem $w={65}>Edición</MenuItem>
          <MenuItem $w={99}>Visualización</MenuItem>
          <MenuItem $w={70}>Historial</MenuItem>
          <MenuItem $w={75}>Favoritos</MenuItem>
          <MenuItem $w={66}>Perfiles</MenuItem>
          <MenuItem $w={69}>Pestaña</MenuItem>
          <MenuItem $w={70}>Ventana</MenuItem>
          <MenuItem $w={50}>Ayuda</MenuItem>
        </MenuGroup>
        <MenuGroup>
          <Status $w={12} $left><svg width="4" height="16"><rect width="4" height="16" rx="1.500" fill="#bdbdbd" /></svg></Status>
          <Status $w={130} $left $ls={-0.2} $c="#fff">Web · Quedan 9 min</Status>
          <Status $w={36}><svg width="15" height="14" stroke="#ccc" strokeWidth="1.600"><path d="M1.500 3v8M4.500 1v12M7.500 4v6M10.500 1v12M13.500 4v6" /></svg></Status>
          <Status $w={32}><svg width="16" height="13" fill="none" stroke="#8b8b8b" strokeWidth="1.300"><path d="M1 1h7v8H1zM5 4h6v5H5zM8 2.500h7v8.500H8" /></svg></Status>
          <Status $w={32}><svg width="16" height="16"><rect width="16" height="16" rx="1" fill="#f2f2f2" /><path d="M8 4l3.500 7.500h-7z" fill="#000" stroke="#000" strokeWidth="2.400" strokeLinejoin="round" /><path d="M8 7.500l1.400 3H6.600z" fill="#f2f2f2" /></svg></Status>
          <Status $w={34}><svg width="15" height="15" fill="none" stroke="#e0e0e0" strokeWidth="1.500"><circle cx="7.500" cy="7.500" r="6.600" /><path d="M6 5v5l4-2.500z" fill="#e0e0e0" stroke="none" /></svg></Status>
          <Status $w={37}><svg width="20" height="14" fill="#c5c5c5"><circle cx="6" cy="4" r="3" /><circle cx="2" cy="5" r="1.300" fill="#888" /><rect x="6.300" y="4" width="2" height="9.500" rx="1" /><circle cx="14" cy="4" r="3" /><circle cx="18" cy="5" r="1.300" fill="#888" /><rect x="11.700" y="4" width="2" height="9.500" rx="1" /></svg></Status>
          <Status $w={33}><FaBluetoothB size={14} color="#ddd" /></Status>
          <Status $w={35}><svg width="14" height="11"><rect width="14" height="11" rx="1.500" fill="#b9b9b9" /><path d="M1 3.500h12M2.500 5.500h3M2.500 7.500h3M7 5.500h4.500v2.500H7z" stroke="#000" fill="none" /></svg></Status>
          <Status $w={43} $size={11.500}>100%</Status>
          <Status $w={32}><Battery /></Status>
          <Status $w={50}><FaWifi size={16} color="#fff" /></Status>
          <Status $w={22}><Search size={14} strokeWidth={2.400} color="#aaa" /></Status>
          <Status $w={41}><svg width="14" height="14" fill="none" stroke="#ddd" strokeWidth="1.300"><rect x="1" y="1" width="12" height="5" rx="2.500" /><rect x="1" y="8" width="12" height="5" rx="2.500" fill="#ddd" /><circle cx="10.300" cy="3.500" r="1.600" fill="#ddd" /><circle cx="10" cy="10.500" r="1" fill="#000" stroke="#000" /></svg></Status>
          <Status $w={75} $left $c="#fff" $ls={0.15}>Lun abr 14</Status>
          <Status $w={33} $left $c="#fff">12:51</Status>
        </MenuGroup>
      </MenuBar>

      <BackWindow>
        <BackTop><BackTab /></BackTop>
        <BackSide />
        <BackFoot><i /><i /></BackFoot>
      </BackWindow>

      <Browser>
        <TabStrip>
          <Lights><Light $c="#fe5850" /><Light $c="#fdb028" /><Light $c="#2cb740" /></Lights>
          {tabs.map(([Icon, t], i) => (
            <Tab key={i} $last={i === tabs.length - 1} $w={i === tabs.length - 1 ? 48 : 50}>
              <Favicon><Icon /></Favicon><TabText>{t}</TabText>
            </Tab>
          ))}
          <ActiveTab><TabText $ml={0}>(</TabText><X size={13} strokeWidth={2.400} /></ActiveTab>
          <Tab $w={54}><Favicon><Flagish /></Favicon><TabText>.</TabText></Tab>
          <Tab $w={49}><Favicon><GlobeFav /></Favicon><TabText>a</TabText></Tab>
          <NewTab><Plus size={16} strokeWidth={2} /></NewTab>
          <TabMenu><ChevronDown size={14} strokeWidth={2.500} /></TabMenu>
        </TabStrip>

        <Toolbar>
          <NavIcon $w={24}><ArrowLeft size={17} /></NavIcon>
          <NavIcon $w={46} $c="#9a9a9a"><ArrowRight size={17} /></NavIcon>
          <NavIcon $w={28} $mr={12}><RotateCw size={16} /></NavIcon>
          <Omnibox>
            <Chip><svg width="14" height="14" fill="none" stroke="#333" strokeWidth="1.600"><circle cx="3.500" cy="3.500" r="1.700" /><path d="M7.500 3.500H13M1 10.500h5.500" /><circle cx="10.500" cy="10.500" r="1.700" /></svg></Chip>
            <Url>a6481a0e-1b17-48e5-925f-133729b45681-00-1ypwsu92tle9.worf.replit.dev<span>/#registro</span></Url>
            <Star size={16} strokeWidth={1.900} color="#5a5c60" />
          </Omnibox>
          <NavIcon $w={52} $pl={2}><svg width="18" height="18" fill="none" stroke="#1f1f1f" strokeWidth="1.800"><path d="M2 3.500h12.500V16H2v-4c2.500 0 2.500-4 0-4zM6.500 3c.3-1.600 3.200-1.600 3.500 0M15 8c1.600.3 1.600 3.200 0 3.500" strokeLinejoin="round" /></svg></NavIcon>
          <Divider />
          <NavIcon $w={48} $pl={3}>
            <svg width="20" height="20" viewBox="0 0 20 20"><circle cx="10" cy="10" r="10" fill="#999" /><path d="M4 4c3-4 10-3 11.500 1l-.5 5-1.500-3.500L8 6 6 10l-2-1z" fill="#222" /><path d="M7 6.500h6.500V12l-3 3-3-2.500z" fill="#ccc" /><path d="M6.500 9h7.500" stroke="#111" strokeWidth="1.700" /><path d="M2 16c2-3 5-3 7 1 2-3 5-3 7-.5a10 10 0 01-14-.5z" fill="#222" /><path d="M5 13l2 4M13 14l-1 4" stroke="#eee" /></svg>
          </NavIcon>
          <Update>Finalizar actualización<EllipsisVertical size={16} strokeWidth={2.600} /></Update>
        </Toolbar>

        <Bookmarks>
          <NavIcon $w={16}><svg width="15" height="15" fill="none" stroke="#333" strokeWidth="1.700"><path d="M1 1h4.500v4.500H1zM9.500 1H14v4.500H9.500zM1 9.500h4.500V14H1zM9.500 9.500H14V14H9.500z" /></svg></NavIcon>
          <NavIcon $w={30}><Divider /></NavIcon>
          {bookmarks.map(([Icon, t, w]) => <Bookmark key={t} $w={w}><Icon />{t}</Bookmark>)}
          <ChevronsRight size={16} strokeWidth={2} />
        </Bookmarks>

        <Viewport>
          <Page>
            <SiteHeader>
              <Brand>
                <LogoBox><LogoMark /></LogoBox>
                <div><BrandName>Global Bids</BrandName><BrandSub>Subastas de Maquinaria</BrandSub></div>
              </Brand>
              <Pill>
                <PillItem $w={97}><FaHouse size={17} />Inicio</PillItem>
                <PillItem $w={127}><FaUsers size={20} />Nosotros</PillItem>
                <PillItem $w={111}><FaCube size={17} />Activos</PillItem>
                <PillItem $w={126}><FaMicrochip size={16} />Tech &amp; IA</PillItem>
                <PillItem $w={184}><FaCalendarDays size={16} />Nuestros Eventos</PillItem>
                <PillItem $w={124}><FaTableCellsLarge size={16} />Catálogo</PillItem>
                <PillItem $w={115} $active><FaHeadset size={17} />Soporte</PillItem>
                <PillItem $w={124}><FaEnvelope size={16} />Contacto</PillItem>
              </Pill>
              <Lang>ES<FaGlobe size={12} /></Lang>
            </SiteHeader>

            <Hero>
              <Heading>¿Listo para participar en<br />nuestros eventos?</Heading>
              <Lead>Accede a nuestra plataforma de remates en vivo para pujar por la maquinaria<br />que necesitas a precios competitivos. Regístrate gratis hoy mismo.</Lead>
              <Card>
                <CardHead><CardTitle>Inscríbete en nuestra plataforma</CardTitle><X size={17} strokeWidth={1.500} /></CardHead>
                <CardText>Regístrate para recibir notificaciones sobre subastas</CardText>
                <Row $gap={16}>
                  <Field>Nombre<Input placeholder="Ingresa tu nombre" /></Field>
                  <Field>Apellido<Input placeholder="Ingresa tu apellido" /></Field>
                </Row>
                <Row><Field>Email<Input placeholder="tucorreo@ejemplo.com" /></Field></Row>
                <Row>
                  <Field as="div">
                    Teléfono
                    <Row $gap={8}>
                      <Select>
                        <svg width="20" height="13"><rect width="20" height="6.500" fill="#efefef" /><rect y="6.500" width="20" height="6.500" fill="#ff4b4b" /><rect width="6.500" height="6.500" fill="#2f3f9c" /><circle cx="3.300" cy="3.200" r="1.200" fill="#fff" /></svg>
                        <span>+56 CL</span><Caret />
                      </Select>
                      <Input placeholder="9 XXXX XXXX" />
                    </Row>
                  </Field>
                </Row>
                <GroupLabel>Interesado en</GroupLabel>
                <Checks>
                  {["Excavadoras", "Cargadores", "Camiones", "Generadores", "Grúas", "Retroexcavadoras"].map((t) => (
                    <Check key={t}><i /><span>{t}</span></Check>
                  ))}
                </Checks>
                <Submit type="button">Registrarme</Submit>
                <Legal>Al registrarte, aceptas nuestra Política de Privacidad y Términos de Servicio.</Legal>
              </Card>
            </Hero>
            <ToTop><ArrowUp size={19} strokeWidth={2.400} /></ToTop>
          </Page>
          <Scrollbar><i /></Scrollbar>
        </Viewport>
      </Browser>

      <Dock>
        <DockItem><Finder /><Running /></DockItem>
        <DockItem><Launchpad /></DockItem>
        <DockItem><Safari /></DockItem>
        <DockItem><ChromeDock /><Running /></DockItem>
        <DockItem><Mail /></DockItem>
        <DockItem><CalendarDock /></DockItem>
        <DockItem><Notes /></DockItem>
        <DockItem><Keynote /></DockItem>
        <DockItem><Settings /></DockItem>
        <DockItem><SpotifyDock /></DockItem>
        <DockItem><Office id="ol" letter="O" c1="#0358a7" c2="#0358a7" c3="#1490df" c4="#0a6fc8" c5="#0a6fc8" outlook /></DockItem>
        <DockItem><Office id="xl" letter="X" c1="#21a366" c2="#33c481" c3="#21965a" c4="#107c41" c5="#185c37" /><Running /></DockItem>
        <DockItem><WhatsappDock /><Running /></DockItem>
        <DockItem><Office id="wd" letter="W" c1="#3a96e0" c2="#41a5ee" c3="#2b7cd3" c4="#185abd" c5="#103f91" /></DockItem>
        <DockItem><NotionCal /></DockItem>
        <DockItem><Ring /></DockItem>
        <DockItem><PhoneMirror /></DockItem>
        <DockItem><ReplitDock /></DockItem>
        <DockRule $l={16} $r={15} />
        <DockItem><PhotoBooth /></DockItem>
        <DockItem><Preview /></DockItem>
        <DockItem><Acrobat /><Running /></DockItem>
        <DockRule $l={14} $r={15} />
        <DockItem><Folder /></DockItem>
        <DockItem><Trash /></DockItem>
      </Dock>
    </Desktop>
  );
}
